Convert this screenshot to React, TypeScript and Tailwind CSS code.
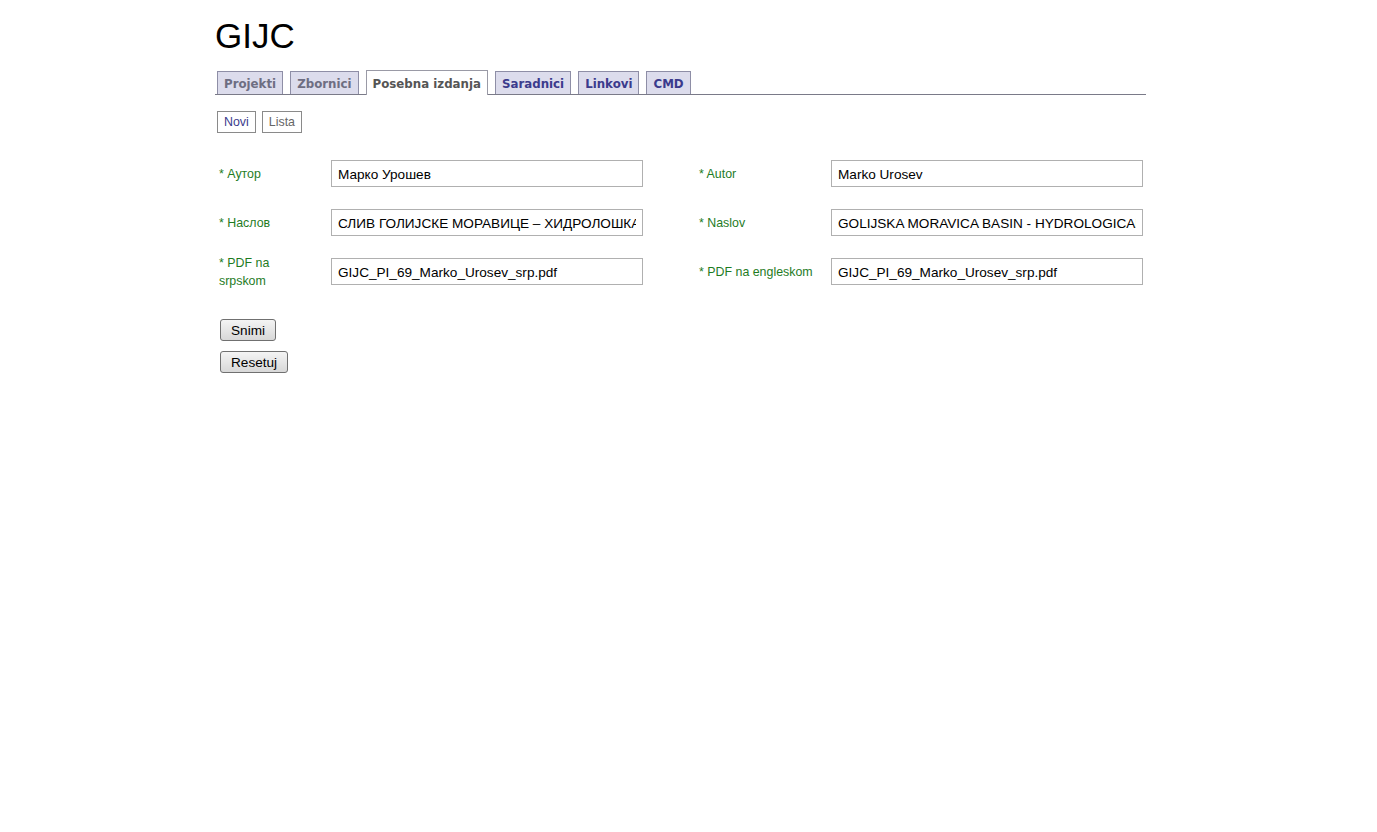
import React from "react";

const tabs = [
  { label: "Projekti", kind: "visited" },
  { label: "Zbornici", kind: "visited" },
  { label: "Posebna izdanja", kind: "active" },
  { label: "Saradnici", kind: "link" },
  { label: "Linkovi", kind: "link" },
  { label: "CMD", kind: "link" },
];

function Tab({ label, kind }: { label: string; kind: string }) {
  if (kind === "active") {
    return (
      <div className="h-[25px] -mb-px flex items-center pt-[3px] px-[6px] bg-white border border-[#9a9aa6] border-b-0 text-[#555] text-[11.8px] font-bold" style={{ fontFamily: '"DejaVu Sans", Verdana, sans-serif' }}>
        {label}
      </div>
    );
  }
  return (
    <div
      className={`h-[23px] flex items-center pt-[3px] px-[6px] bg-[#dcdcec] border border-[#8e8ea6] border-b-0 text-[11.8px] font-bold ${kind === "visited" ? "text-[#6e6e82]" : "text-[#3b3b8c]"}`}
      style={{ fontFamily: '"DejaVu Sans", Verdana, sans-serif' }}
    >
      {label}
    </div>
  );
}

function Label({ children }: { children: React.ReactNode }) {
  return (
    <div className="h-[27px] flex items-center">
      <div className="text-[12.4px] leading-[18px] text-[#1f7c1f] pr-2 whitespace-nowrap">{children}</div>
    </div>
  );
}

function Field({ value }: { value: string }) {
  return (
    <input
      readOnly
      value={value}
      className="w-[312px] h-[27px] border border-[#b0b0b0] px-[6px] pt-[1px] text-[13.6px] text-black outline-none bg-white"
      style={{ fontFamily: '"Liberation Sans", Arial, sans-serif' }}
    />
  );
}

export default function App() {
  return (
    <div className="min-h-[832px] bg-white" style={{ fontFamily: '"Liberation Sans", Arial, sans-serif' }}>
      <div className="ml-[215px] w-[931px]">
        <h1 className="pt-[14px] text-[35px] leading-[44px] text-black font-normal">GIJC</h1>
        <div className="mt-[12px] flex items-end gap-[7px] pl-[2px] border-b border-[#7a7a88]">
          {tabs.map((t) => (
            <Tab key={t.label} label={t.label} kind={t.kind} />
          ))}
        </div>
        <div className="mt-[16px] flex gap-[6px] pl-[2px]">
          <div className="h-[22px] flex items-center px-[6px] border border-[#8a8a8a] text-[12.4px] text-[#3b3b8c]">Novi</div>
          <div className="h-[22px] flex items-center px-[6px] border border-[#8a8a8a] text-[12.4px] text-[#666]">Lista</div>
        </div>
        <div className="mt-[27px] ml-[4px] grid grid-cols-[112px_312px_56px_132px_312px] auto-rows-[27px] gap-y-[22px] items-center">
          <Label>* Аутор</Label>
          <Field value="Марко Урошев" />
          <div />
          <Label>* Autor</Label>
          <Field value="Marko Urosev" />

          <Label>* Наслов</Label>
          <Field value="СЛИВ ГОЛИЈСКЕ МОРАВИЦЕ – ХИДРОЛОШКА АНАЛИЗА" />
          <div />
          <Label>* Naslov</Label>
          <Field value="GOLIJSKA MORAVICA BASIN - HYDROLOGICAL ANALYSIS" />

          <Label>
            * PDF na
            <br />
            srpskom
          </Label>
          <Field value="GIJC_PI_69_Marko_Urosev_srp.pdf" />
          <div />
          <Label>* PDF na engleskom</Label>
          <Field value="GIJC_PI_69_Marko_Urosev_srp.pdf" />
        </div>
        <div className="mt-[34px] ml-[5px] flex flex-col items-start gap-[10px]">
          <button className="h-[22px] px-[10px] pt-[1px] rounded-[3px] border border-[#707070] bg-gradient-to-b from-[#f4f4f4] to-[#d8d8d8] text-[13.6px] text-black leading-none">
            Snimi
          </button>
          <button className="h-[22px] px-[10px] pt-[1px] rounded-[3px] border border-[#707070] bg-gradient-to-b from-[#f4f4f4] to-[#d8d8d8] text-[13.6px] text-black leading-none">
            Resetuj
          </button>
        </div>
      </div>
    </div>
  );
}
